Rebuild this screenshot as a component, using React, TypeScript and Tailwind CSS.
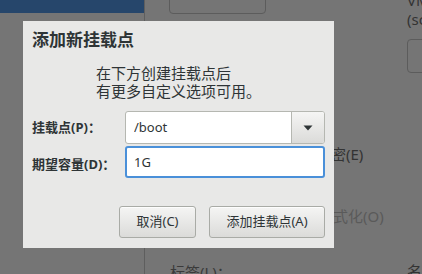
import { useState } from 'react';

const font = { fontFamily: '"Noto Sans", "Noto Sans CJK SC", sans-serif' };

function GtkButton({ label, width }: { label: string; width: string }) {
  return (
    <button
      className={`${width} h-[32px] rounded-[3px] border border-[#a9aba6] bg-gradient-to-b from-[#f5f5f4] to-[#dbdbd9] text-[13px] text-[#2e3436] shadow-[inset_0_1px_0_#fdfdfd]`}
    >
      {label}
    </button>
  );
}

export default function App() {
  const [mount, setMount] = useState('/boot');
  const [size, setSize] = useState('1G');

  return (
    <div className="relative w-[422px] h-[274px] overflow-hidden bg-[#757575]" style={font}>
      {/* Dimmed installer window behind the dialog */}
      <div className="flex h-full">
        <div className="w-[144px] shrink-0">
          <div className="h-[13px] bg-[#26466b]" />
        </div>
        <div className="flex flex-1 border-l border-[#5e5e5e]">
          <div className="flex-1 pl-[24px]">
            <div className="mt-[-10px] h-[24px] w-[97px] rounded-b-[4px] border border-[#5c5c5c]" />
            <div className="mt-[132px] pl-[147px] text-[15px] leading-[16px] text-[#333]">加密(E)</div>
            <div className="mt-[46px] pl-[149px] text-[15px] leading-[16px] text-[#5a5a5a]">格式化(O)</div>
            <div className="mt-[40px] pl-px text-[15px] leading-[16px] text-[#3a3a3a]">标签(L)：</div>
          </div>
          <div className="w-[15px] overflow-hidden text-[15px] text-[#333] whitespace-nowrap">
            <div className="mt-[-9px] leading-[18px]">VM</div>
            <div className="leading-[20px]">(sc</div>
            <div className="mt-[10px] h-[34px] w-[30px] rounded-[4px] border border-[#5c5c5c]" />
            <div className="mt-[190px] leading-[16px]">名</div>
          </div>
        </div>
      </div>

      {/* Add mount point dialog */}
      <div className="absolute left-[23px] top-[21px] w-[311px] h-[227px] bg-[#e8e8e7] px-[9px] pt-[7px] text-[#2e3436]">
        <h1 className="text-[17px] font-bold leading-[24px] text-[#2e3436]">添加新挂载点</h1>
        <p className="mt-[12px] pl-[64px] text-[15px] leading-[18px]">
          在下方创建挂载点后
          <br />
          有更多自定义选项可用。
        </p>

        <div className="mt-[11px] grid grid-cols-[93px_200px] gap-y-[2px] items-center">
          <label className="text-[13px] font-bold">挂载点(P)：</label>
          <div className="flex h-[33px] rounded-[3px] border border-[#b5b7b1] bg-white overflow-hidden">
            <input
              value={mount}
              onChange={(e) => setMount(e.target.value)}
              className="flex-1 min-w-0 px-[8px] text-[13px] text-[#2e3436] outline-none"
            />
            <div className="flex w-[33px] items-center justify-center border-l border-[#b5b7b1] bg-gradient-to-b from-[#f5f5f4] to-[#dbdbd9]">
              <svg width="10" height="6" viewBox="0 0 10 6">
                <path d="M0.5 0.5h9L5 5.5z" fill="#2e3436" />
              </svg>
            </div>
          </div>

          <label className="text-[13px] font-bold pt-[6px]">期望容量(D)：</label>
          <input
            value={size}
            onChange={(e) => setSize(e.target.value)}
            className="h-[32px] rounded-[3px] border-2 border-[#4a90d9] bg-white px-[7px] text-[13px] text-[#2e3436] outline-none"
          />
        </div>

        <div className="mt-[28px] flex justify-end gap-[13px]">
          <GtkButton label="取消(C)" width="w-[77px]" />
          <GtkButton label="添加挂载点(A)" width="w-[116px]" />
        </div>
      </div>
    </div>
  );
}
